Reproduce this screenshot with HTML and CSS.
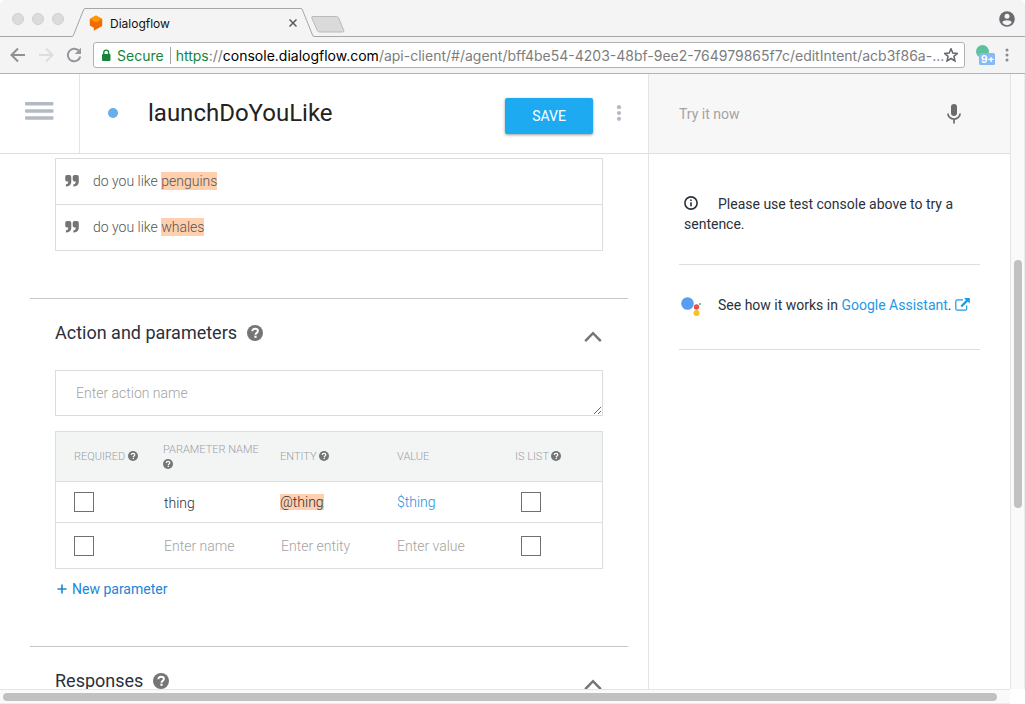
FILE: index.html
```html
<!DOCTYPE html>
<html lang="en">
<head>
<meta charset="utf-8">
<title>Dialogflow</title>
<link rel="stylesheet" href="styles.css">
</head>
<body>
<svg class="sprite" aria-hidden="true">
  <symbol id="help" viewBox="0 0 16 16">
    <circle cx="8" cy="8" r="8" fill="#757575"/>
    <path d="M5.3 6.3C5.3 4.6 6.400 3.800 8.100 3.800S10.900 4.700 10.900 6.100C10.900 7.900 8.500 7.900 8.500 9.700" fill="none" stroke="#fff" stroke-width="2"/>
    <rect x="7.400" y="10.700" width="2.200" height="2.100" fill="#fff"/>
  </symbol>
  <symbol id="quote" viewBox="0 0 14 12">
    <path d="M2 0h2.500Q6.300 0 6.300 2v4.500Q6.300 11 1.500 11.400H.9V9.200Q3.300 9 3.400 6.400H2Q.2 6.400.2 4.500V2Q.2 0 2 0zM9.500 0H12q1.800 0 1.800 2v4.500Q13.800 11 9 11.400H8.400V9.200Q10.800 9 10.900 6.400H9.500Q7.700 6.400 7.700 4.500V2Q7.700 0 9.500 0z" fill="#757575"/>
  </symbol>
  <symbol id="chevron" viewBox="0 0 18 12">
    <path d="M1.200 10.200 9 2.200l7.800 8" fill="none" stroke="#757575" stroke-width="2.500"/>
  </symbol>
</svg>
<div class="window">
  <div class="tabstrip">
    <div class="lights"><i></i><i></i><i></i></div>
    <svg class="slope" viewBox="0 0 13 29"><path d="M0 28.500 Q1 28.500 1.500 27L11.500 2Q12 .5 13 .5" fill="none" stroke="#a6a6a6"/></svg>
    <div class="tab">
      <svg class="favicon" width="14" height="16" viewBox="0 0 14 16"><path d="M.8 4 7 .4 13.200 4v7L4.800 15.700V12.800L.8 10.600z" fill="#ef6c00"/><path d="M.8 4 7 .4 13.200 4 7 7.500z" fill="#ff9800"/></svg>
      <span class="tab-title">Dialogflow</span>
      <button class="plain tab-close" aria-label="Close tab"><svg width="8" height="8" viewBox="0 0 8 8"><path d="M.5.5l7 7M7.500.5l-7 7" stroke="#5a5a5a" stroke-width="1.500"/></svg></button>
    </div>
    <svg class="slope" viewBox="0 0 13 29"><path d="M0 .5Q1 .5 1.500 2L11.500 27Q12 28.500 13 28.500" fill="none" stroke="#a6a6a6"/></svg>
    <div class="strip-rest">
      <button class="plain new-tab" aria-label="New tab"><svg width="34" height="17" viewBox="0 0 34 17"><path d="M2 .5H25.500Q27 .5 27.600 2L32.800 14.500Q33.200 16 31.700 16H8.500Q7 16 6.300 14.500L.8 2Q.4.5 2 .5z" fill="#dadada" stroke="#b9b9b9"/></svg></button>
      <svg class="profile" width="16" height="16" viewBox="0 0 16 16"><circle cx="8" cy="8" r="7.800" fill="#6a6a70"/><circle cx="8" cy="5.300" r="2.500" fill="#f4f4f4"/><path d="M3.200 11.600Q4.200 9.200 8 9.200t4.800 2.400Q11 14.200 8 14.200T3.200 11.600z" fill="#f4f4f4"/></svg>
    </div>
  </div>
  <div class="toolbar">
    <button class="plain" aria-label="Back"><svg width="16" height="16" viewBox="0 0 16 16"><path d="M15 8H2M8 1.500 1.500 8 8 14.500" fill="none" stroke="#8f8f94" stroke-width="2"/></svg></button>
    <button class="plain" aria-label="Forward"><svg width="16" height="16" viewBox="0 0 16 16"><path d="M1 8h13M8 1.500 14.500 8 8 14.500" fill="none" stroke="#dedede" stroke-width="2"/></svg></button>
    <button class="plain" aria-label="Reload"><svg width="16" height="16" viewBox="0 0 16 16"><path d="M14.300 9.500A6.300 6.300 0 1 1 12.600 3.500" fill="none" stroke="#96969b" stroke-width="2"/><path d="M15 .8V7H8.800z" fill="#96969b"/></svg></button>
    <div class="omnibox">
      <svg width="10" height="13" viewBox="0 0 10 13"><rect x="1" y="5" width="8.500" height="7" rx="1" fill="#16853a"/><path d="M2.800 5.500V3.500a2.400 2.400 0 0 1 4.800 0v2" fill="none" stroke="#16853a" stroke-width="1.400"/></svg>
      <span class="secure">Secure</span>
      <span class="url" role="textbox" aria-label="Address"><span class="green">https</span>://<span class="host">console.dialogflow.com</span>/api-client/#/agent/bff4be54-4203-48bf-9ee2-764979865f7c/editIntent/acb3f86a-...</span>
      <button class="plain" aria-label="Bookmark"><svg width="14" height="14" viewBox="1 1 14 14"><path d="M8 1.700 9.800 6l4.700.4-3.600 3 1.100 4.600L8 11.500 4 14l1.100-4.600-3.600-3L6.200 6z" fill="none" stroke="#66666c" stroke-width="1.500"/></svg></button>
    </div>
    <svg class="ext" width="20" height="20" viewBox="0 0 20 20"><circle cx="6.500" cy="6.500" r="6.500" fill="#5cc29a"/><rect x="3" y="8" width="16" height="12" rx="1.500" fill="#8ab8f5"/><text x="5" y="18" class="badge">9+</text></svg>
    <button class="plain" aria-label="Browser menu"><svg width="4" height="14" viewBox="0 0 4 14"><g fill="#8a8a90"><circle cx="2" cy="2" r="1.500"/><circle cx="2" cy="7" r="1.500"/><circle cx="2" cy="12" r="1.500"/></g></svg></button>
  </div>

  <div class="viewport">
    <main class="editor">
      <header class="bar">
        <button class="plain menu" aria-label="Menu"><svg width="29" height="18" viewBox="0 0 29 18"><g fill="#b4bac4"><rect width="28.500" height="3.500" rx="1"/><rect y="7.200" width="28.500" height="3.500" rx="1"/><rect y="14.300" width="28.500" height="3.500" rx="1"/></g></svg></button>
        <div class="intent">
          <i class="dot"></i>
          <h1>launchDoYouLike</h1>
          <button class="save">SAVE</button>
          <button class="plain more" aria-label="More"><svg width="6" height="16" viewBox="0 0 6 16"><g fill="#b4bac4"><circle cx="3" cy="2.200" r="2.100"/><circle cx="3" cy="8" r="2.100"/><circle cx="3" cy="13.800" r="2.100"/></g></svg></button>
        </div>
      </header>
      <div class="content">
        <ul class="phrases">
          <li><svg width="14" height="12"><use href="#quote"/></svg><span>do you like <mark>penguins</mark></span></li>
          <li><svg width="14" height="12"><use href="#quote"/></svg><span>do you like <mark>whales</mark></span></li>
        </ul>
        <section class="section">
          <div class="section-head"><h2>Action and parameters</h2><svg width="16" height="16"><use href="#help"/></svg><button class="plain collapse" aria-label="Collapse"><svg width="18" height="12"><use href="#chevron"/></svg></button></div>
          <textarea class="action" placeholder="Enter action name" aria-label="Action name" rows="1"></textarea>
          <table class="params">
            <colgroup><col class="c1"><col class="c2"><col class="c2"><col class="c3"><col></colgroup>
            <thead>
              <tr>
                <th>REQUIRED <svg width="10" height="10"><use href="#help"/></svg></th>
                <th>PARAMETER NAME <svg width="10" height="10"><use href="#help"/></svg></th>
                <th>ENTITY <svg width="10" height="10"><use href="#help"/></svg></th>
                <th>VALUE</th>
                <th>IS LIST <svg width="10" height="10"><use href="#help"/></svg></th>
              </tr>
            </thead>
            <tbody>
              <tr>
                <td><input type="checkbox" aria-label="Required"></td>
                <td><input type="text" value="thing" aria-label="Parameter name"></td>
                <td><mark>@thing</mark></td>
                <td><input type="text" class="value" value="$thing" aria-label="Value"></td>
                <td class="list"><input type="checkbox" aria-label="Is list"></td>
              </tr>
              <tr>
                <td><input type="checkbox" aria-label="Required"></td>
                <td><input type="text" placeholder="Enter name" aria-label="Parameter name"></td>
                <td><input type="text" placeholder="Enter entity" aria-label="Entity"></td>
                <td><input type="text" class="value" placeholder="Enter value" aria-label="Value"></td>
                <td class="list"><input type="checkbox" aria-label="Is list"></td>
              </tr>
            </tbody>
          </table>
          <button class="plain add"><svg width="10" height="10" viewBox="0 0 10 10"><path d="M5 .5v9M.5 5h9" stroke="#1a86d8" stroke-width="1.600"/></svg>New parameter</button>
        </section>
        <section class="section">
          <div class="section-head"><h2>Responses</h2><svg width="16" height="16"><use href="#help"/></svg><button class="plain collapse" aria-label="Collapse"><svg width="18" height="12"><use href="#chevron"/></svg></button></div>
        </section>
      </div>
    </main>
    <aside class="console">
      <div class="try">
        <input type="text" placeholder="Try it now" aria-label="Try it now">
        <button class="plain" aria-label="Speak"><svg width="14" height="20" viewBox="0 0 14 20"><rect x="4" y="0" width="6" height="12" rx="3" fill="#6b6b6b"/><path d="M.9 9.500a6.100 5.600 0 0 0 12.200 0M7 15v4.500" fill="none" stroke="#6b6b6b" stroke-width="1.700"/></svg></button>
      </div>
      <div class="notes">
        <p class="note tip"><svg width="14" height="14" viewBox="0 0 14 14"><circle cx="7" cy="7" r="6.100" fill="none" stroke="#2b303b" stroke-width="1.600"/><path d="M7 6.200v4M7 3.500v1.600" stroke="#2b303b" stroke-width="1.600"/></svg>Please use test console above to try a sentence.</p>
        <p class="note assistant"><svg width="21" height="20" viewBox="0 0 21 20"><circle cx="6.500" cy="6.500" r="6.300" fill="#5a9cf0"/><circle cx="15.500" cy="10" r="2.700" fill="#e8504a"/><circle cx="15.500" cy="16" r="3" fill="#f2c32c"/><circle cx="19" cy="7" r="1.100" fill="#4fbf73"/></svg><span>See how it works in <a href="#">Google Assistant</a>. <a href="#" aria-label="Open in new window"><svg width="15" height="13" viewBox="0 0 15 13"><path d="M8 1.900H2.300Q.8 1.900.8 3.400v7.300Q.8 12.200 2.300 12.200h7.900q1.500 0 1.500-1.500V7.500" fill="none" stroke="#1c9ae5" stroke-width="1.200"/><path d="M9 0h5.800v5.500l-2-1.900L7 9.200 5.500 7.700 11 2z" fill="#1c9ae5"/></svg></a></span></p>
      </div>
    </aside>
    <div class="vscroll"><i></i></div>
  </div>
  <div class="hscroll"><div class="htrack"><i></i></div></div>
</div>
</body>
</html>
```
FILE: styles.css
```css
* { box-sizing: border-box; }
body { margin: 0; font-family: Roboto, "Liberation Sans", sans-serif; font-size: 14px; color: #2b303b; background: #fff; }
h1, h2, p, ul { margin: 0; padding: 0; font-weight: 400; }
svg { display: block; flex: none; }
.sprite { position: absolute; width: 0; height: 0; }
.plain { display: block; flex: none; padding: 0; border: 0; background: none; font: inherit; }
input, textarea { font: inherit; color: inherit; }
a { color: #1c9ae5; text-decoration: none; }
mark { background: #ffcfae; color: inherit; }

.window { display: flex; flex-direction: column; height: 100vh; overflow: hidden; }

/* browser frame */
.tabstrip { display: flex; align-items: flex-end; height: 37px; background: #f4f4f4; border-radius: 5px 5px 0 0; font-family: Inter, sans-serif; }
.lights { display: flex; gap: 8px; width: 72px; height: 37px; padding: 13px 0 0 12px; border-bottom: 1px solid #a6a6a6; }
.lights i { width: 12px; height: 12px; border: 1px solid #cfcfcf; border-radius: 50%; background: #dcdcdc; }
.slope { width: 13px; height: 29px; }
.tab { display: flex; align-items: center; gap: 7px; width: 216px; height: 29px; padding: 0 4px; border-top: 1px solid #a6a6a6; font-size: 12px; color: #111; }
.tab-title { flex: 1; }
.strip-rest { display: flex; flex: 1; justify-content: space-between; height: 37px; padding: 11px 10px 0 0; border-bottom: 1px solid #a6a6a6; }
.new-tab { height: 17px; margin: 5px 0 0 -3px; }
.toolbar { display: flex; align-items: center; gap: 12px; height: 37px; padding: 0 16px 0 10px; background: #f4f4f4; border-bottom: 1px solid #b2b2b2; font-family: Inter, sans-serif; }
.omnibox { display: flex; flex: 1; align-items: center; min-width: 0; height: 26px; margin: 0 0 0 -1px; padding: 0 6px 0 7px; background: #fff; border: 1px solid #b2b2b2; border-radius: 3px; }
.secure { margin-left: 6px; padding-right: 6px; border-right: 1px solid #a6a6a6; color: #16853a; }
.url { flex: 1; min-width: 0; margin-left: 5px; overflow: hidden; white-space: nowrap; color: #7d7d7d; }
.green { color: #16853a; }
.host { color: #000; }
.ext { margin: 0 -3px 0 -1px; }
.badge { font: 700 10px Inter, sans-serif; fill: #fff; }

/* page */
.viewport { display: flex; flex: 1; min-height: 0; }
.editor { display: flex; flex: 1; flex-direction: column; min-width: 0; border-right: 1px solid #e4e4e4; }
.bar { display: flex; flex: none; height: 80px; border-bottom: 1px solid #e0e0e0; }
.menu { display: flex; align-items: center; justify-content: center; width: 80px; padding-bottom: 5px; border-right: 1px solid #e4e4e4; }
.intent { display: flex; flex: 1; align-items: center; padding: 0 26px 2px 28px; }
.dot { width: 10px; height: 10px; border-radius: 50%; background: #67aeea; }
h1 { flex: 1; margin-left: 30px; font-size: 24px; color: #222; }
.save { width: 88px; height: 36px; margin-top: 7px; border: 0; border-radius: 2px; background: #1eaaf1; box-shadow: 0 1px 3px rgba(0, 0, 0, .4); color: #fff; font: 400 14px Roboto, sans-serif; }
.more { margin-left: 23px; }
.content { flex: 1; min-height: 0; padding: 4px 20px 0 30px; overflow: hidden; }
.phrases { margin: 0 25px 47px; border: 1px solid #dcdcdc; list-style: none; font-weight: 300; color: #555; }
.phrases li { display: flex; align-items: center; gap: 14px; height: 45px; padding: 0 9px 2px; }
.phrases li + li { height: 46px; border-top: 1px solid #dcdcdc; }
.phrases mark { display: inline-block; line-height: 18px; }
.section { padding: 16px 25px 47px; border-top: 1px solid #ccc5c7; }
.section-head { display: flex; align-items: center; gap: 10px; height: 36px; }
h2 { margin-bottom: 2px; font-size: 18px; }
.collapse { margin: 8px 1px 0 auto; }
.action { display: block; width: 100%; height: 46px; margin: 19px 0 15px; padding: 13px 20px; border: 1px solid #dcdcdc; line-height: 18px; font-weight: 300; overflow: hidden; resize: vertical; }
::placeholder { color: #a3a3a3; opacity: 1; }
.params { width: 100%; table-layout: fixed; border: 1px solid #dcdfde; border-collapse: separate; border-spacing: 0; font-weight: 300; }
.c1 { width: 89px; }
.c2 { width: 117px; }
.c3 { width: 118px; }
.params th, .params td { padding: 0 0 0 18px; text-align: left; }
.params th { height: 49px; background: #f3f5f4; color: #9a9ea8; font-size: 11px; line-height: 15px; font-weight: 300; }
.params th svg { display: inline-block; vertical-align: -1px; }
.params td { height: 41px; border-top: 1px solid #dcdfde; }
.params tr:last-child td { height: 46px; }
.params td.list { padding-left: 24px; }
.params input[type="checkbox"] { display: block; appearance: none; width: 20px; height: 20px; margin: 0; border: 1px solid #707070; background: #fff; }
.params input[type="text"] { display: block; width: 100%; padding: 1px 0 0 1px; border: 0; background: none; }
.params input.value { padding: 0; color: #1c8fdc; }
.params mark { display: inline-block; line-height: 16px; }
.add { display: flex; align-items: center; gap: 5px; margin: 10px 0 0 2px; line-height: 20px; color: #1a86d8; }

.console { flex: none; width: 361px; }
.try { display: flex; align-items: center; justify-content: space-between; height: 80px; padding: 0 49px 0 30px; background: #f7f7f7; border-bottom: 1px solid #e0e0e0; }
.try input { flex: 1; min-width: 0; padding: 0; border: 0; background: none; }
.notes { padding: 0 30px; }
.note { border-bottom: 1px solid #dedede; line-height: 20px; }
.tip { padding: 40px 5px 30px; }
.tip svg { display: inline-block; margin-right: 20px; vertical-align: -1px; }
.assistant { display: flex; align-items: flex-end; gap: 16px; padding: 30px 0 32px 2px; }
.assistant span { padding-bottom: 2px; }
.assistant a svg { display: inline-block; vertical-align: -1px; }

/* scroll bars */
.vscroll { display: flex; flex-direction: column; width: 15px; padding: 186px 3px 0; background: #fafafa; border-left: 1px solid #e4e4e4; border-right: 1px solid #ececec; }
.vscroll i { width: 8px; height: 248px; border-radius: 4px; background: #c1c1c1; }
.hscroll { flex: none; height: 15px; padding-right: 15px; }
.htrack { height: 15px; padding: 3px 13px 0 3px; background: #fafafa; border-top: 1px solid #e4e4e4; border-bottom: 1px solid #ececec; }
.htrack i { display: block; height: 8px; border-radius: 4px; background: #c1c1c1; }
```
